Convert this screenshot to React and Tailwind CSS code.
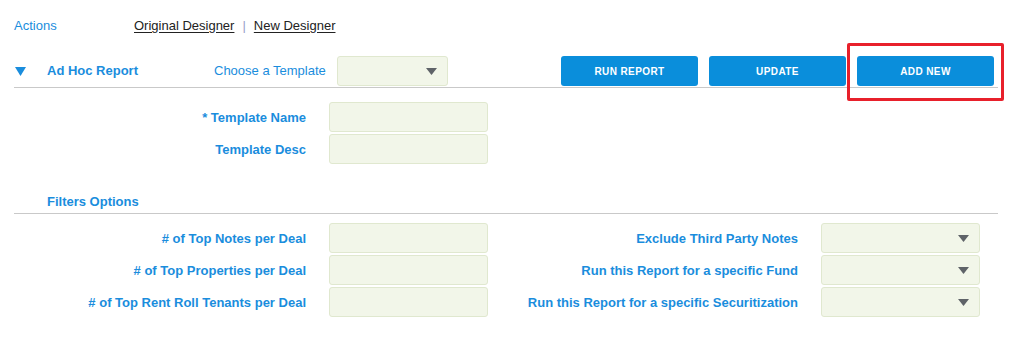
import React from "react";

const font = { fontFamily: '"Liberation Sans", Arial, sans-serif' };

function Arrow() {
  return (
    <svg width="11" height="7" viewBox="0 0 11 7" className="block">
      <path d="M0 0 L11 0 L5.5 7 Z" fill="#5f6368" />
    </svg>
  );
}

function Select({ w = "w-[159px]" }) {
  return (
    <div className={`${w} h-[30px] rounded-[3px] border border-[#e0e8cf] bg-[#f2f6e9] flex items-center justify-end pr-[10px]`}>
      <Arrow />
    </div>
  );
}

function Input() {
  return <div className="w-[159px] h-[30px] rounded-[3px] border border-[#e0e8cf] bg-[#f2f6e9]" />;
}

function Label({ children, w }) {
  return (
    <div className={`${w} text-right text-[13px] font-bold text-[#1a8ddd] leading-none`}>{children}</div>
  );
}

function Btn({ children }) {
  return (
    <div className="w-[137px] h-[30px] rounded-[3px] bg-[#0a8edb] text-white text-[10px] font-bold tracking-[0.4px] flex items-center justify-center">
      {children}
    </div>
  );
}

export default function App() {
  const filters = [
    ["# of Top Notes per Deal", "Exclude Third Party Notes"],
    ["# of Top Properties per Deal", "Run this Report for a specific Fund"],
    ["# of Top Rent Roll Tenants per Deal", "Run this Report for a specific Securitization"],
  ];
  return (
    <div className="w-[1009px] h-[341px] bg-white" style={font}>
      <div className="pl-[14px] w-[998px]">
        {/* Actions row */}
        <div className="h-[56px] flex items-start pt-[18px] text-[13px] leading-[16px]">
          <span className="w-[120px] text-[#1a8ddd]">Actions</span>
          <span className="text-[#222] underline underline-offset-2">Original Designer</span>
          <span className="text-[#9aa0c8] mx-[8px]">|</span>
          <span className="text-[#222] underline underline-offset-2">New Designer</span>
        </div>

        {/* Header row */}
        <div className="h-[32px] flex items-start border-b border-[#c9c9c9]">
          <div className="h-[30px] flex items-center w-full">
            <div className="w-[33px] pl-[1px]">
              <svg width="11" height="9" viewBox="0 0 11 9" className="block">
                <path d="M0 0 L11 0 L5.5 9 Z" fill="#1a8ddd" />
              </svg>
            </div>
            <div className="w-[167px] text-[13px] font-bold text-[#1a8ddd]">Ad Hoc Report</div>
            <div className="w-[123px] text-[13px] text-[#1a8ddd]">Choose a Template</div>
            <Select w="w-[111px]" />
            <div className="ml-[113px] flex gap-[11px] relative">
              <Btn>RUN REPORT</Btn>
              <Btn>UPDATE</Btn>
              <div className="relative">
                <Btn>ADD NEW</Btn>
                <div className="absolute left-[-10px] top-[-13px] w-[157px] h-[58px] border-[3px] border-[#e8202b] rounded-[2px]" />
              </div>
            </div>
          </div>
        </div>

        {/* Template fields */}
        <div className="pt-[14px] flex flex-col gap-[2px]">
          <div className="flex items-center gap-[23px]">
            <Label w="w-[292px]">* Template Name</Label>
            <Input />
          </div>
          <div className="flex items-center gap-[23px]">
            <Label w="w-[292px]">Template Desc</Label>
            <Input />
          </div>
        </div>

        {/* Filters header */}
        <div className="h-[50px] border-b border-[#c9c9c9] flex items-end pb-[2px] pl-[33px]">
          <span className="text-[13px] font-bold text-[#1a8ddd]">Filters Options</span>
        </div>

        {/* Filter rows */}
        <div className="pt-[9px] flex flex-col gap-[2px]">
          {filters.map(([l, r]) => (
            <div key={l} className="flex items-center">
              <Label w="w-[292px]">{l}</Label>
              <div className="ml-[23px]">
                <Input />
              </div>
              <Label w="w-[310px]">{r}</Label>
              <div className="ml-[23px]">
                <Select />
              </div>
            </div>
          ))}
        </div>
      </div>
    </div>
  );
}
